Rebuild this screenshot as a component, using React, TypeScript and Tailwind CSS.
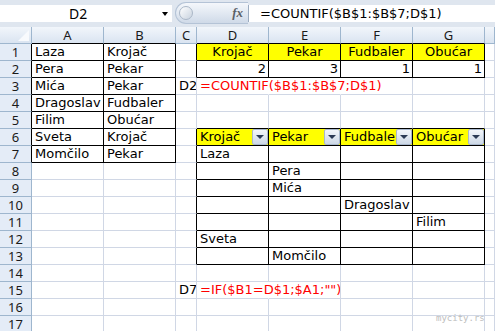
import React from 'react';

type Range = Readonly<{ r1: number; r2: number; c1: number; c2: number }>;

// A..H, H is the partial column at the right edge
const COLS = ['A', 'B', 'C', 'D', 'E', 'F', 'G', ''];
const ROWS = Array.from({ length: 17 }, (_, i) => i + 1);

const RANGES: Range[] = [
	{ r1: 1, r2: 7, c1: 0, c2: 1 },
	{ r1: 1, r2: 2, c1: 3, c2: 6 },
	{ r1: 6, r2: 13, c1: 3, c2: 6 },
];

const inRange = (r: number, c: number) =>
	RANGES.some((g) => r >= g.r1 && r <= g.r2 && c >= g.c1 && c <= g.c2);

type CellData = Readonly<{
	text?: string;
	align?: 'left' | 'center' | 'right';
	yellow?: boolean;
	red?: boolean;
	filter?: boolean;
	overflow?: boolean;
}>;

const names = ['Laza', 'Pera', 'Mića', 'Dragoslav', 'Filim', 'Sveta', 'Momčilo'];
const jobs = ['Krojač', 'Pekar', 'Pekar', 'Fudbaler', 'Obućar', 'Krojač', 'Pekar'];
const heads = ['Krojač', 'Pekar', 'Fudbaler', 'Obućar'];
const counts = ['2', '3', '1', '1'];

const buildData = () => {
	const d: Record<string, CellData> = {};
	names.forEach((n, i) => {
		d[`${i + 1}-0`] = { text: n };
		d[`${i + 1}-1`] = { text: jobs[i] };
	});
	heads.forEach((h, i) => {
		d[`1-${i + 3}`] = { text: h, align: 'center', yellow: true };
		d[`2-${i + 3}`] = { text: counts[i], align: 'right' };
		d[`6-${i + 3}`] = { text: h, yellow: true, filter: true };
	});
	names.forEach((n, i) => {
		const col = heads.indexOf(jobs[i]) + 3;
		d[`${i + 7}-${col}`] = { text: n };
	});
	d['3-2'] = { text: 'D2' };
	d['3-3'] = { text: '=COUNTIF($B$1:$B$7;D$1)', red: true, overflow: true };
	d['15-2'] = { text: 'D7' };
	d['15-3'] = { text: '=IF($B1=D$1;$A1;"")', red: true, overflow: true };
	return d;
};

const DATA = buildData();

// gridlines hidden under overflowing text
const HIDDEN_RIGHT = new Set(['3-3', '3-4', '15-3']);

const FilterButton = () => (
	<div className="absolute right-0 top-0 flex h-[16px] w-[16px] items-center justify-center rounded-[2px] border border-[#a9b8cc] bg-gradient-to-b from-[#f3f6fa] to-[#cdd8e6]">
		<div className="h-0 w-0 border-x-[4px] border-t-[4px] border-x-transparent border-t-[#2b3a55]" />
	</div>
);

const Cell = ({ r, c }: { r: number; c: number }) => {
	const data = DATA[`${r}-${c}`] ?? {};
	const key = `${r}-${c}`;
	const right = HIDDEN_RIGHT.has(key)
		? 'border-r-transparent'
		: inRange(r, c) || inRange(r, c + 1)
			? 'border-r-black'
			: 'border-r-[#d0d7e5]';
	const bottom =
		inRange(r, c) || inRange(r + 1, c) ? 'border-b-black' : 'border-b-[#d0d7e5]';
	const align =
		data.align === 'center'
			? 'justify-center'
			: data.align === 'right'
				? 'justify-end pr-[2px]'
				: 'justify-start pl-[3px]';

	return (
		<div
			className={`relative flex h-[17px] items-center whitespace-nowrap border-r border-b ${right} ${bottom} ${align} ${
				data.yellow ? 'bg-[#ffff00]' : ''
			} ${data.overflow ? 'overflow-visible' : 'overflow-hidden'} ${
				data.red ? 'text-[#ff0000]' : 'text-black'
			}`}
		>
			<span className="leading-[16px]">{data.text}</span>
			{data.filter ? <FilterButton /> : null}
		</div>
	);
};

const FormulaBar = () => (
	<div className="flex h-[27px] items-start bg-[#dfe6ef]">
		<div className="relative mt-[5px] flex h-[17px] w-[172px] items-center bg-white">
			<span className="ml-[69px] text-[14px] leading-[16px] text-black [font-family:'Noto_Sans',sans-serif]">
				D2
			</span>
			<div className="absolute left-[162px] top-[7px] h-0 w-0 border-x-[3.5px] border-t-[4px] border-x-transparent border-t-black" />
		</div>
		<div className="relative mt-[2px] ml-[3px] flex h-[22px] w-[73px] items-center rounded-l-full border border-r-0 border-[#b4c3d6] bg-gradient-to-b from-[#f4f7fb] via-[#e2e9f2] to-[#cfdae8]">
			<div className="ml-[3px] h-[14px] w-[14px] rounded-full border border-[#aab7c7] bg-gradient-to-br from-white to-[#c9d3df]" />
			<span className="ml-auto mr-[5px] text-[13px] font-bold italic text-[#5a5f66] [font-family:'Liberation_Serif',serif]">
				fx
			</span>
		</div>
		<div className="mt-[5px] flex h-[17px] flex-1 items-center border-l border-[#9aabc0] bg-white pl-[11px]">
			<span className="text-[13px] leading-[16px] text-black">=COUNTIF($B$1:$B$7;D$1)</span>
		</div>
	</div>
);

export default function App() {
	return (
		<div className="relative h-[331px] w-[495px] overflow-hidden bg-white [font-family:'DejaVu_Sans',Verdana,sans-serif] text-[13px]">
			<FormulaBar />
			<div className="grid grid-cols-[32px_72px_72px_21px_72px_72px_72px_72px_1fr] bg-white">
				<div className="relative h-[17px] border-r border-b border-[#9eb6ce] bg-gradient-to-b from-[#f2f6fb] to-[#dae4f1]">
					<div className="absolute bottom-[2px] right-[2px] h-0 w-0 border-b-[11px] border-l-[11px] border-b-[#f8fafd] border-l-transparent" />
				</div>
				{COLS.map((col, c) => (
					<div
						key={`h-${c}`}
						className={`flex h-[17px] items-center justify-center border-r border-b border-r-[#9eb6ce] bg-gradient-to-b from-[#f2f6fb] to-[#dae4f1] text-[13px] text-[#1a1a1a] [font-family:'Noto_Sans',sans-serif] ${
							inRange(1, c) ? 'border-b-black' : 'border-b-[#9eb6ce]'
						}`}
					>
						<span className="leading-[16px]">{col}</span>
					</div>
				))}
				{ROWS.map((r) => (
					<React.Fragment key={`r-${r}`}>
						<div
							className={`flex h-[17px] items-center justify-center border-r border-b border-b-[#9eb6ce] bg-[#e4ecf7] text-[13px] text-[#1a1a1a] [font-family:'Noto_Sans',sans-serif] ${
								inRange(r, 0) ? 'border-r-black' : 'border-r-[#9eb6ce]'
							}`}
						>
							<span className="leading-[16px]">{r}</span>
						</div>
						{COLS.map((_, c) => (
							<Cell key={`${r}-${c}`} r={r} c={c} />
						))}
					</React.Fragment>
				))}
			</div>
			<div className="absolute left-[436px] top-[312px] text-[9px] leading-[12px] text-[#bdbdbd] [font-family:'DejaVu_Sans_Mono',monospace]">
				mycity.rs
			</div>
		</div>
	);
}
